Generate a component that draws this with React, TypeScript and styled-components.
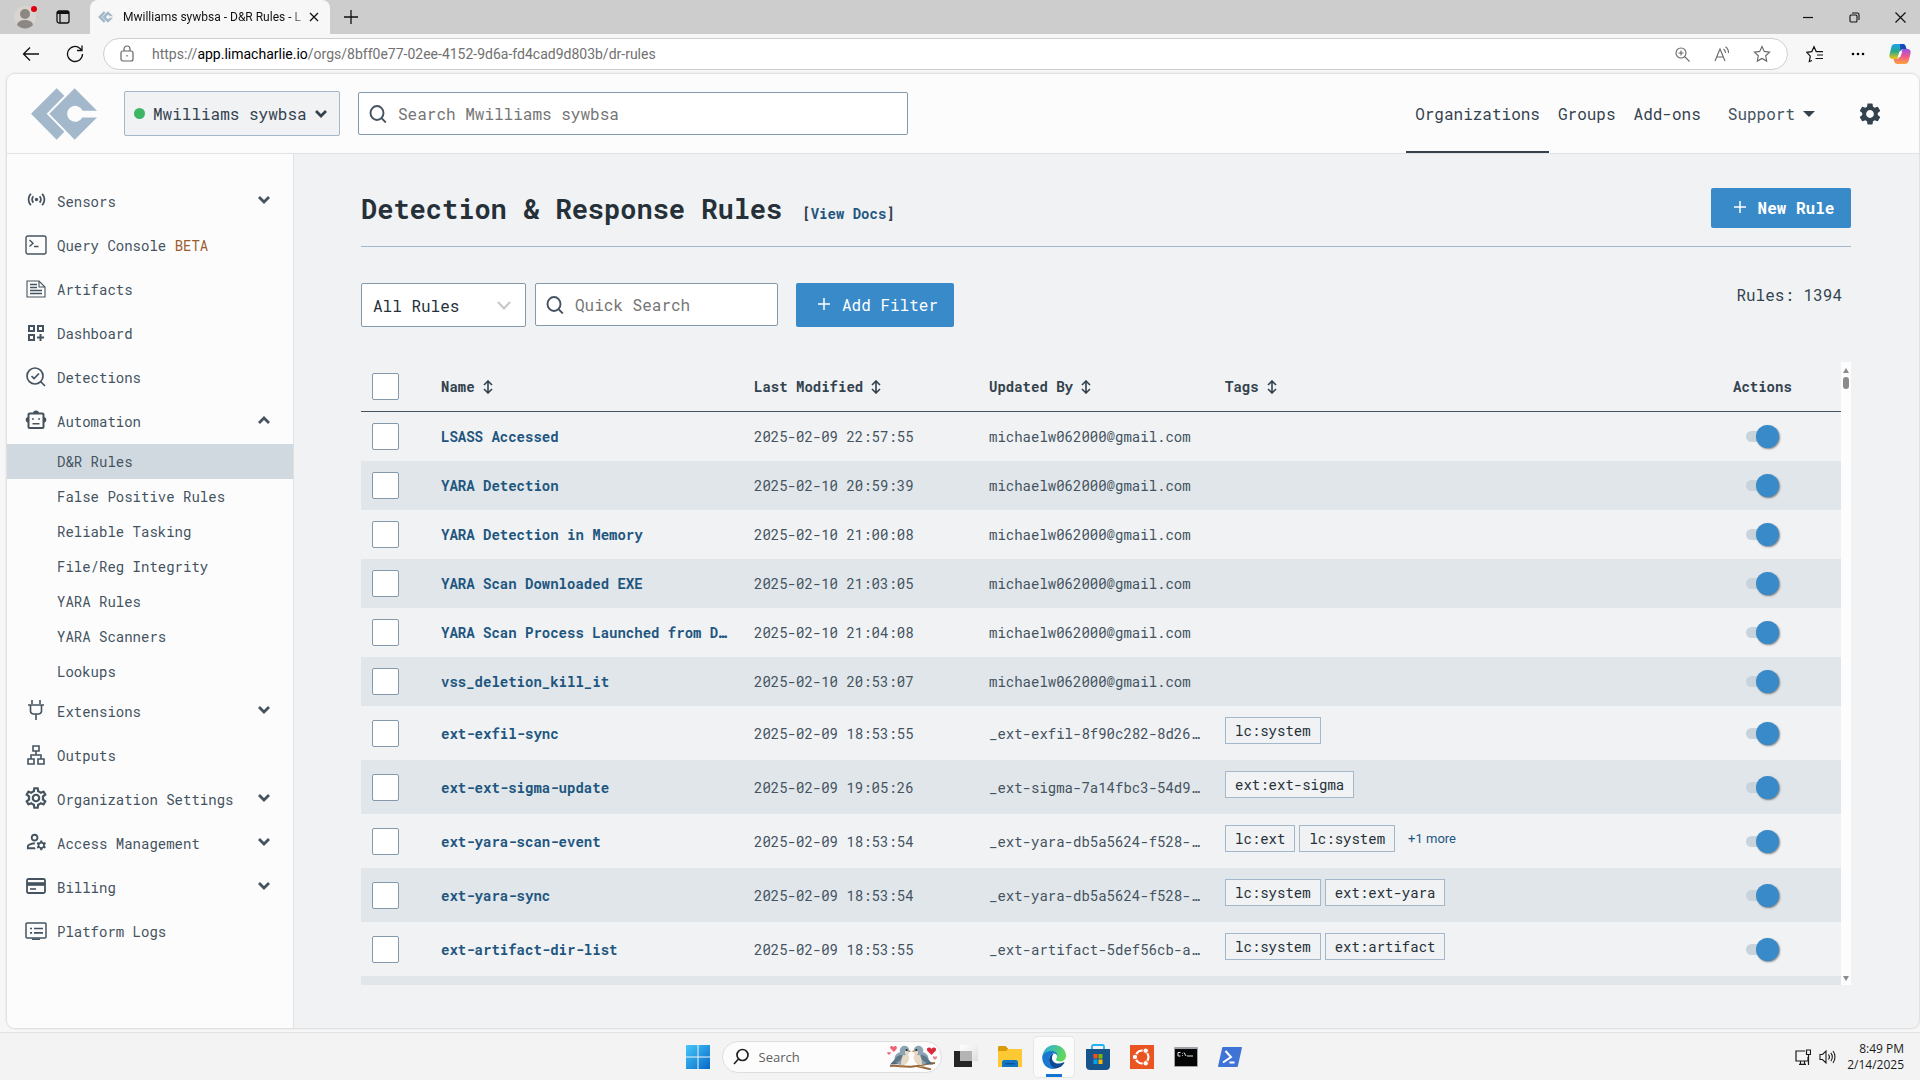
import React, { useState } from "react";
import styled, { createGlobalStyle, css } from "styled-components";
import { MdOutlineManageAccounts, MdOutlineSettings, MdSensors, MdSettings } from "react-icons/md";

const mono = `"Roboto Mono", "Liberation Mono", monospace`;
const ui = `"Segoe UI", "Open Sans", "Noto Sans", sans-serif`;
const uiNarrow = `"Segoe UI", Roboto, sans-serif`;

const color = {
  ink: "#263038",
  slate: "#34424e",
  text: "#44535f",
  link: "#1f567f",
  blue: "#388ac9",
  line: "#a3b8ca",
  field: "#8499ab",
  canvas: "#f0f2f4",
  stripe: "#e0e6ea",
  panel: "#fcfcfc",
};

const GlobalStyle = createGlobalStyle`
  *, *::before, *::after { box-sizing: border-box; }
  body { margin: 0; background: #f7f7f7; font-family: ${mono}; color: ${color.text}; }
  button, input, select { font: inherit; color: inherit; }
  button { border: 0; padding: 0; background: none; cursor: pointer; }
  a { color: inherit; text-decoration: none; }
  ul { list-style: none; margin: 0; padding: 0; }
  svg { display: block; flex: none; }
`;

const Desktop = styled.div`
  display: flex;
  flex-direction: column;
  height: 100vh;
  min-height: 720px;
  overflow: hidden;
`;

/* ---------- Browser window ---------- */

const TitleBar = styled.header`
  display: flex;
  align-items: center;
  flex: none;
  height: 34px;
  background: #cdcdcd;
  color: #111;
  font-family: ${uiNarrow};
`;

const TitleTools = styled.div`
  display: flex;
  align-items: center;
  gap: 16px;
  width: 90px;
  padding-left: 14px;
`;

const IconButton = styled.button<{ $w?: number; $color?: string }>`
  display: flex;
  align-items: center;
  justify-content: center;
  flex: none;
  width: ${(p) => p.$w ?? 24}px;
  height: 28px;
  color: ${(p) => p.$color ?? "#111"};
`;

const Tab = styled.div`
  display: flex;
  align-items: center;
  width: 240px;
  height: 34px;
  padding: 0 10px 0 8px;
  border-radius: 8px 8px 0 0;
  background: #f7f7f7;
`;

const TabTitle = styled.span`
  flex: 1;
  margin-left: 10px;
  white-space: nowrap;
  font-size: 12px;
  line-height: 16px;
  mask-image: linear-gradient(90deg, #000 90%, transparent);
`;

const WindowButtons = styled.div`
  display: flex;
  gap: 18px;
  margin-left: auto;
  padding-right: 6px;
`;

const Toolbar = styled.div`
  display: flex;
  align-items: center;
  flex: none;
  gap: 14px;
  height: 40px;
  padding: 0 8px 0 17px;
  background: #f7f7f7;
  font-family: ${uiNarrow};
`;

const Address = styled.div`
  display: flex;
  align-items: center;
  flex: 1;
  gap: 18px;
  height: 32px;
  padding: 0 11px 0 16px;
  border: 1px solid #cfcfcf;
  border-radius: 16px;
  background: #fff;
`;

const Url = styled.a`
  flex: 1;
  color: #717171;
  font-size: 14px;
  line-height: 20px;
  b { color: #000; font-weight: 400; }
`;

const ToolGroup = styled.div<{ $gap: number }>`
  display: flex;
  align-items: center;
  gap: ${(p) => p.$gap}px;
`;

const Page = styled.div`
  display: flex;
  flex-direction: column;
  flex: 1;
  min-height: 0;
  margin: 0 1px 4px 7px;
  overflow: hidden;
  border-radius: 8px;
  background: ${color.canvas};
  box-shadow: 0 0 2px 1px #d9d9d9;
`;

/* ---------- Application header ---------- */

const AppHeader = styled.header`
  display: flex;
  align-items: center;
  flex: none;
  height: 80px;
  padding: 0 36px 0 24px;
  border-bottom: 1px solid #e0e2e4;
  background: ${color.panel};
`;

const OrgButton = styled.button`
  display: flex;
  align-items: center;
  gap: 8px;
  width: 216px;
  height: 45px;
  margin: 0 18px 0 27px;
  padding: 0 12px 0 9px;
  border: 1px solid ${color.line};
  border-radius: 2px;
  background: ${color.canvas};
  color: ${color.slate};
  font-size: 16px;
  span { flex: 1; text-align: left; white-space: nowrap; }
  i { width: 11px; height: 11px; border-radius: 50%; background: #3db564; }
`;

const SearchBox = styled.label<{ $w: number }>`
  display: flex;
  align-items: center;
  gap: 11px;
  width: ${(p) => p.$w}px;
  height: 43px;
  padding: 0 10px;
  border: 1px solid ${color.field};
  border-radius: 2px;
  background: #fff;
  color: ${color.text};
  input {
    flex: 1;
    min-width: 0;
    padding: 0;
    border: 0;
    outline: 0;
    background: none;
    font-size: 16px;
  }
  input::placeholder { color: #757575; opacity: 1; }
`;

const TopNav = styled.nav`
  display: flex;
  align-self: stretch;
  margin-left: auto;
`;

const TopLink = styled.a<{ $active?: boolean }>`
  display: flex;
  align-items: center;
  padding: 2px 9px 0;
  border-bottom: 2px solid ${(p) => (p.$active ? color.slate : "transparent")};
  color: ${color.slate};
  font-size: 16px;
`;

const SupportButton = styled.button`
  display: flex;
  align-items: center;
  gap: 8px;
  margin: 0 42px 0 18px;
  font-size: 16px;
`;

const Body = styled.div`
  display: flex;
  flex: 1;
  min-height: 0;
`;

/* ---------- Sidebar ---------- */

const Sidebar = styled.nav`
  flex: none;
  width: 287px;
  padding-top: 25px;
  border-right: 1px solid #dfe2e5;
  background: ${color.panel};
  font-size: 14px;
`;

const rowStyle = css`
  display: flex;
  align-items: center;
  gap: 9px;
  width: 100%;
  height: 44px;
  padding: 0 23px 0 17px;
  text-align: left;
  white-space: nowrap;
`;

const SideLink = styled.a`${rowStyle}`;
const SideButton = styled.button`
  ${rowStyle}
  svg { margin-bottom: 3px; }
`;

const SideLabel = styled.span`
  flex: 1;
  em { color: #9c5a2b; font-style: normal; }
`;

const SideIcon = styled.span`
  display: flex;
  align-items: center;
  justify-content: center;
  flex: none;
  width: 24px;
  height: 24px;
`;

const SubList = styled.ul`
  padding-top: 1px;
`;

const SubLink = styled.a<{ $active?: boolean }>`
  display: flex;
  align-items: center;
  height: 35px;
  padding-left: 50px;
  background: ${(p) => (p.$active ? "#d1d9e0" : "transparent")};
`;

/* ---------- Rules page ---------- */

const Main = styled.main`
  display: flex;
  flex-direction: column;
  flex: 1;
  min-width: 0;
  padding: 34px 68px 43px 67px;
`;

const Heading = styled.div`
  display: flex;
  align-items: flex-start;
  justify-content: space-between;
  flex: none;
  height: 59px;
  border-bottom: 1px solid ${color.line};
`;

const Title = styled.div`
  display: flex;
  align-items: baseline;
  gap: 20px;
  padding-top: 5px;
  font-size: 14px;
  font-weight: 700;
  color: ${color.slate};
  h1 { margin: 0; color: ${color.ink}; font-size: 27px; line-height: 32px; }
  a { color: ${color.link}; }
`;

const PrimaryButton = styled.button<{ $w: number; $h: number; $bold?: boolean }>`
  display: flex;
  align-items: center;
  justify-content: center;
  gap: 12px;
  width: ${(p) => p.$w}px;
  height: ${(p) => p.$h}px;
  padding: 0 0 2px 6px;
  border-radius: 2px;
  background: ${color.blue};
  color: #fff;
  font-size: 16px;
  font-weight: ${(p) => (p.$bold ? 700 : 400)};
`;

const Filters = styled.div`
  display: flex;
  align-items: flex-start;
  flex: none;
  padding: 36px 9px 35px 0;
`;

const SelectBox = styled.label`
  display: grid;
  align-items: center;
  width: 165px;
  height: 44px;
  margin-right: 9px;
  border: 1px solid ${color.field};
  border-radius: 2px;
  background: #fff;
  select {
    grid-area: 1 / 1;
    width: 100%;
    height: 100%;
    padding: 0 40px 0 11px;
    border: 0;
    outline: 0;
    appearance: none;
    background: none;
    color: ${color.ink};
    font-size: 16px;
  }
  svg { grid-area: 1 / 1; justify-self: end; margin-right: 14px; pointer-events: none; }
`;

const QuickSearchSlot = styled.div`
  margin-right: 18px;
`;

const RuleCount = styled.p`
  margin: 0 0 0 auto;
  color: ${color.slate};
  font-size: 16px;
  line-height: 24px;
`;

const Scroller = styled.div`
  display: flex;
  flex: 1;
  min-height: 0;
`;

const TableView = styled.div`
  flex: 1;
  min-width: 0;
  overflow: hidden;
`;

const Table = styled.table`
  width: 100%;
  table-layout: fixed;
  border-collapse: separate;
  border-spacing: 0;
  font-size: 14px;
  td, th { padding: 0 10px; text-align: left; white-space: nowrap; overflow: hidden; }
  th { height: 50px; border-bottom: 1px solid ${color.text}; color: ${color.slate}; }
  td:nth-child(2) { text-overflow: ellipsis; }
  tbody tr:nth-child(even) { background: ${color.stripe}; }
`;

const Col = styled.col<{ $w?: number }>`
  width: ${(p) => (p.$w ? `${p.$w}px` : "auto")};
`;

const Row = styled.tr<{ $tall?: boolean }>`
  height: ${(p) => (p.$tall ? 54 : 49)}px;
`;

const SortButton = styled.button`
  display: flex;
  align-items: center;
  gap: 8px;
  font-weight: 700;
`;

const Check = styled.input`
  display: block;
  width: 27px;
  height: 27px;
  margin: 0 0 0 1px;
  appearance: none;
  border: 1px solid ${color.field};
  border-radius: 2px;
  background: #fff;
  &:checked { background: ${color.blue}; }
`;

const RuleLink = styled.a`
  color: ${color.link};
  font-weight: 700;
`;

const Tags = styled.div`
  display: flex;
  gap: 4px;
  padding-bottom: 5px;
`;

const Tag = styled.span`
  padding: 0 9px;
  border: 1px solid ${color.line};
  background: ${color.canvas};
  color: ${color.ink};
  line-height: 25px;
`;

const MoreTags = styled.button`
  margin-left: 9px;
  color: ${color.link};
  font-family: Roboto, sans-serif;
  font-size: 13px;
`;

const Toggle = styled.input`
  display: flex;
  align-items: center;
  width: 28px;
  height: 11px;
  margin: 0 0 0 13px;
  appearance: none;
  background: #c9d3db;
  border-radius: 6px;
  &::before {
    content: "";
    flex: none;
    width: 23px;
    height: 23px;
    border-radius: 50%;
    background: #9aa7b1;
    box-shadow: 1px 1px 2px rgba(0, 0, 0, 0.45);
  }
  &:checked::before { margin-left: 10px; background: ${color.blue}; }
`;

const ScrollBar = styled.div`
  display: flex;
  flex-direction: column;
  align-items: center;
  gap: 4px;
  width: 10px;
  padding: 6px 0 4px;
  background: #fdfdfd;
  i { width: 6px; height: 12px; border-radius: 3px; background: #8b8b8b; }
  svg:last-child { margin-top: auto; }
`;

/* ---------- Taskbar ---------- */

const Taskbar = styled.footer`
  display: grid;
  grid-template-columns: 1fr auto 1fr;
  align-items: center;
  flex: none;
  height: 48px;
  border-top: 1px solid #e2e2e2;
  background: #f3f3f3;
  font-family: ${ui};
`;

const Apps = styled.div`
  display: flex;
  align-items: center;
  grid-column: 2;
  padding-left: 7px;
`;

const AppButton = styled.button<{ $active?: boolean }>`
  display: flex;
  align-items: center;
  justify-content: center;
  width: 40px;
  height: 40px;
  margin: 0 2px;
  border-radius: 4px;
  ${(p) =>
    p.$active &&
    css`
      background: linear-gradient(#0f74d2, #0f74d2) 50% 100% / 16px 3px no-repeat #fbfbfb;
      box-shadow: 0 0 0 1px #e6e6e6;
    `}
`;

const TaskSearch = styled.label`
  display: flex;
  align-items: center;
  gap: 10px;
  width: 220px;
  height: 32px;
  margin: 0 2px;
  padding: 0 4px 0 10px;
  border: 1px solid #dedede;
  border-radius: 16px;
  background: #fcfcfc;
  input {
    flex: 1;
    width: 0;
    padding: 0;
    border: 0;
    outline: 0;
    background: none;
    font-size: 13px;
  }
  input::placeholder { color: #5e5e5e; opacity: 1; }
`;

const Tray = styled.div`
  display: flex;
  align-items: center;
  justify-self: end;
  gap: 8px;
  padding-right: 16px;
  color: #1b1b1b;
`;

const Clock = styled.time`
  margin-left: 3px;
  text-align: right;
  font-size: 12px;
  line-height: 16px;
`;

/* ---------- Drawings ---------- */

const Logo = ({ size }: { size: number }) => (
  <svg width={size} height={Math.round((size * 155) / 198)} viewBox="0 0 198 155" fill="#a3b8ca">
    <path d="M0 77 77 0l23 23-53 54 53 54-23 24z" />
    <path d="M55 77 131 0l67 68h-43a24 24 0 1 0-1 20h44l-67 67z" />
  </svg>
);

const SearchIcon = () => (
  <svg width="18" height="18" viewBox="0 0 18 18" fill="none" stroke="currentColor" strokeWidth="1.900">
    <ellipse cx="8" cy="8" rx="6.500" ry="7" />
    <path d="m12.500 13.200 4.300 4.300" />
  </svg>
);

const Chevron = ({ up = false }: { up?: boolean }) => (
  <svg width="12" height="8" viewBox="0 0 12 8" fill="none" stroke="currentColor" strokeWidth="2.800">
    <path d={up ? "m1 7 5-5 5 5" : "m1 1 5 5 5-5"} />
  </svg>
);

const Plus = () => (
  <svg width="12" height="12" viewBox="0 0 12 12" fill="none" stroke="currentColor" strokeWidth="1.500">
    <path d="M6 0v12M0 6h12" />
  </svg>
);

const Sort = () => (
  <svg width="10" height="14" viewBox="0 0 10 14" fill="none" stroke="currentColor" strokeWidth="1.600">
    <path d="M5 1v12M1 5l4-4 4 4M1 9l4 4 4-4" />
  </svg>
);

const Line = ({ children, w = 22, h = 22, sw = 1.6 }: { children: React.ReactNode; w?: number; h?: number; sw?: number }) => (
  <svg width={w} height={h} viewBox={`0 0 ${w} ${h}`} fill="none" stroke="currentColor" strokeWidth={sw}>
    {children}
  </svg>
);

const ConsoleIcon = () => (
  <Line w={22} h={20} sw={1.4}>
    <rect x="1" y="1" width="20" height="18" rx="2" />
    <path d="m4.500 5 3.500 3.300L4.500 11.500M9 11.500h4.500" />
  </Line>
);
const ArtifactIcon = () => (
  <Line w={20} h={18} sw={1.1}>
    <path d="M1 1h12l6 6v10H1zM13 1v6h6" />
    <path d="M4 4.500h7M4 7.500h7M4 10.500h12M4 13.500h12" strokeWidth="1.300" />
  </Line>
);
const DashboardIcon = () => (
  <Line w={18} h={18} sw={2}>
    <path d="M2 2h5v5H2zM11 2h5v5h-5zM2 11h5v5H2zM13.500 10v7M10 13.500h7" />
  </Line>
);
const DetectIcon = () => (
  <Line w={20} h={20} sw={1.7}>
    <circle cx="9" cy="9" r="8" />
    <path d="m14.500 14.500 4.500 4.500M5.500 9l2.500 2.500 5-5" />
  </Line>
);
const RobotIcon = () => (
  <Line w={22} h={20} sw={2}>
    <rect x="3.500" y="3.500" width="15" height="14.500" rx="1" />
    <path d="M3.500 7a2.800 2.800 0 0 0 0 5.600zM18.500 7a2.800 2.800 0 0 1 0 5.600zM8 3.500a3 3 0 0 1 6 0z" fill="currentColor" stroke="none" />
    <path d="M7 9h1.800M13.200 9H15M7.500 13.800h7" strokeWidth="1.500" />
  </Line>
);
const PlugIcon = () => (
  <Line w={18} h={20} sw={1.6}>
    <path d="M5 0v4M13 0v4M1 5h16M3.500 5v6a3 3 0 0 0 3 3h5a3 3 0 0 0 3-3V5M9 14v6" />
  </Line>
);
const OutputIcon = () => (
  <Line w={18} h={20} sw={1.6}>
    <path d="M6 1h6v5H6zM1 14h6v5H1zM11 14h6v5h-6zM9 6v4M4 14v-4h10v4" />
  </Line>
);
const CardIcon = () => (
  <Line w={20} h={16} sw={1.8}>
    <rect x="1" y="1" width="18" height="14" rx="1.500" />
    <path d="M1 6h18" strokeWidth="3.600" />
    <path d="M4 11h6" strokeWidth="1.600" />
  </Line>
);
const LogsIcon = () => (
  <Line w={22} h={18} sw={1.5}>
    <rect x="1" y="1" width="20" height="15" rx="1" />
    <path d="M7 17.300h8M5 6.500h2M9 6.500h9M5 10.800h2M9 10.800h9" strokeWidth="1.700" />
  </Line>
);

const Avatar = () => (
  <svg width="26" height="24" viewBox="0 0 26 24">
    <circle cx="11" cy="12" r="11" fill="#d8d4cf" />
    <circle cx="11" cy="9" r="5" fill="#8c8782" />
    <path d="M3 20a8 5 0 0 1 16 0 11 11 0 0 1-16 0z" fill="#8c8782" />
    <circle cx="20" cy="4" r="3" fill="#e2000f" />
  </svg>
);

const TabsIcon = () => (
  <svg width="14" height="14" viewBox="0 0 14 14" fill="none" stroke="#111" strokeWidth="1.300">
    <rect x="1" y="1" width="12" height="12" rx="2" />
    <path d="M1 2.500h12" strokeWidth="3" />
    <path d="M4 4v9" />
  </svg>
);

const Copilot = () => (
  <svg width="22" height="22" viewBox="0 0 22 22">
    <defs>
      <linearGradient id="cpA" x1="0" y1="0" x2="0" y2="1">
        <stop offset="0" stopColor="#1da1f0" />
        <stop offset=".5" stopColor="#2aa88d" />
        <stop offset="1" stopColor="#f7c80a" />
      </linearGradient>
      <linearGradient id="cpB" x1="0" y1="0" x2="0" y2="1">
        <stop offset="0" stopColor="#9b4fe8" />
        <stop offset=".5" stopColor="#f0598a" />
        <stop offset="1" stopColor="#ffa33d" />
      </linearGradient>
    </defs>
    <path d="M6 1h8a3 3 0 0 1 2.500 2l1 3h-3c-2 0-3 1-3.500 3l-1.500 5c-.5 1.500-1 2-3 2H3.500c-2.500 0-3.500-2-3-4.500l2-8C3 2 4.200 1 6 1z" fill="url(#cpA)" />
    <path d="M11 1h3a3 3 0 0 1 2.500 2l1 3h-3c-1.500 0-2.500.6-3 2z" fill="#1747b8" />
    <path d="M16 21H8a3 3 0 0 1-2.500-2l-1-3h3c2 0 3-1 3.500-3l1.500-5c.5-1.500 1-2 3-2h3c2.500 0 3.500 2 3 4.500l-2 8c-.5 1.500-1.700 2.500-3.500 2.500z" fill="url(#cpB)" />
    <path d="M10.500 8.500h2.800l-2 5.500H8.700z" fill="#fff" />
  </svg>
);

const starPath = "m9 1.500 2.300 4.900 5.300.7-3.900 3.700 1 5.300L9 13.500l-4.700 2.600 1-5.300L1.400 7.100l5.300-.7z";

const WindowsLogo = () => (
  <svg width="24" height="24" viewBox="0 0 24 24">
    <defs>
      <linearGradient id="win" x1="0" y1="0" x2="1" y2="1">
        <stop offset="0" stopColor="#45c8fb" />
        <stop offset="1" stopColor="#0669c7" />
      </linearGradient>
    </defs>
    <path d="M0 0h11.500v11.500H0zM12.500 0H24v11.500H12.500zM0 12.500h11.500V24H0zM12.500 12.500H24V24H12.500z" fill="url(#win)" />
  </svg>
);

const Bird = () => (
  <g>
    <path d="M0 19.500 6 13l5 6z" fill="#4f687a" />
    <ellipse cx="11.500" cy="13.500" rx="7" ry="6.500" fill="#8ba3b2" />
    <path d="M15 8c4 1 5 4 3.500 7-1.200 3-4 5-7.500 5 0-5 1-9 4-12z" fill="#ead9c4" />
    <circle cx="14.500" cy="5.500" r="4.700" fill="#8ba3b2" />
    <path d="M15 6.500c2-1 4 0 4 1.500s-2.500 2.500-4 1z" fill="#ead9c4" />
    <path d="M3.500 18c1-5 4-8 8.500-8 .5 4-3 8-8.500 8z" fill="#5d7688" />
    <path d="m19 5 2.300 1.200L19 7.300z" fill="#d89246" />
    <circle cx="16.700" cy="5" r="1" fill="#222" />
    <path d="M10 20v2.500M13 20v2.500" stroke="#c98445" strokeWidth="1" />
  </g>
);

const Lovebirds = () => (
  <svg width="50" height="26" viewBox="0 0 50 26">
    <path d="M3 22c9-1 14 1.500 23 .5 8-.5 12-3 22-3.500M30 22l14 3.500" fill="none" stroke="#98693e" strokeWidth="1.900" />
    <g transform="translate(3 1)"><Bird /></g>
    <g transform="translate(46 1) scale(-1 1)"><Bird /></g>
    <path d="M7 8 3.500 4.500C2 2.500 5 .8 6.500 3 8 .8 11 2.500 9.500 5zM2 11 .3 9.200C-.2 8 1.500 7.300 2 8.500 2.700 7.300 4.300 8 3.700 9.200z" fill="#ee6473" />
    <path d="m44.500 11-4-4c-2-3 2-5 4-2 2-3 6-1 4 2z" fill="#dd2b3d" />
    <path d="m48 16-2-2c-.8-1.500 1-2.300 2-1 1-1.300 2.600-.5 2 1z" fill="#f2808b" />
  </svg>
);

const TaskView = () => (
  <svg width="24" height="24" viewBox="0 0 24 24">
    <defs>
      <linearGradient id="tv" x1="0" y1="0" x2="1" y2="1">
        <stop offset="0" stopColor="#ffffff" />
        <stop offset="1" stopColor="#dedede" />
      </linearGradient>
    </defs>
    <path d="M0 6h18v16H0z" fill="#252525" />
    <path d="M6 0h18v16H6z" fill="url(#tv)" />
    <path d="M6 6h12v10H6z" fill="#b4b4b4" />
  </svg>
);

const Folder = () => (
  <svg width="24" height="22" viewBox="0 0 24 22">
    <path d="M0 1.500C0 .5.500 0 1.500 0h6l3 3H22v5H0z" fill="#d99a0b" />
    <path d="M0 5h8l2-2h12.500c1 0 1.500.5 1.500 1.500V21H0z" fill="#fcc934" />
    <path d="M4 21v-5c0-1 1-2 2-2h12c1 0 2 1 2 2v5z" fill="#1274c4" />
    <path d="M7 17h10v1.500H7z" fill="#0b5596" />
  </svg>
);

const EdgeLogo = () => (
  <svg width="24" height="24" viewBox="0 0 24 24">
    <defs>
      <linearGradient id="edA" x1="0" y1="0" x2="1" y2=".4">
        <stop offset="0" stopColor="#2aa9e8" />
        <stop offset="1" stopColor="#5fd95a" />
      </linearGradient>
    </defs>
    <path d="M.5 11C1 5 6 0 12 0c7 0 12 5 12 10.500 0 4-3 6-6 6-2.500 0-4-1-4-2 0-.7 1-1 1-3C15 9 12.500 7 9.500 7 5 7 1.500 9 .5 11z" fill="url(#edA)" />
    <path d="M.3 11C2 7.500 6 6 9.500 6c4 0 6 2.500 6 5 0-1-1.500-2.500-3.500-2.500-3 0-5 3-5 6.500 0 4 3 8 7 8.500-8 2-14.500-4-13.700-12.500z" fill="#1779d0" />
    <path d="M10 9c-2 1-3 3.500-3 6 0 5 4 9 7 8.500 3.500-.5 6.500-2.500 8.300-5.500.3-.6-.2-1-.7-.7-5.600 2.700-11.600.7-11.600-4.300 0-1.500.5-3 1.500-4z" fill="#0c4a96" />
  </svg>
);

const StoreLogo = () => (
  <svg width="24" height="26" viewBox="0 0 24 26">
    <path d="M6 6V2.500C6 1.500 6.500 1 7.500 1h9c1 0 1.500.5 1.500 1.500V6" fill="none" stroke="#20b4ee" strokeWidth="1.800" />
    <path d="M0 5h24v17c0 2.500-1.500 4-4 4H4c-2.500 0-4-1.500-4-4z" fill="#18548c" />
    <path d="M7.500 10h4v4.500h-4z" fill="#f25022" />
    <path d="M12.500 10h4v4.500h-4z" fill="#7fba00" />
    <path d="M7.500 15.500h4V20h-4z" fill="#00a4ef" />
    <path d="M12.500 15.500h4V20h-4z" fill="#ffb900" />
  </svg>
);

const UbuntuLogo = () => (
  <svg width="24" height="24" viewBox="0 0 24 24">
    <path d="M0 0h24v24H0z" fill="#e95420" />
    <circle cx="12" cy="12" r="6.500" fill="none" stroke="#fff" strokeWidth="2.200" />
    <g fill="#fff" stroke="#e95420" strokeWidth="1">
      <circle cx="5" cy="12" r="2.700" />
      <circle cx="15.700" cy="5.700" r="2.700" />
      <circle cx="15.700" cy="18.300" r="2.700" />
    </g>
  </svg>
);

const TerminalLogo = () => (
  <svg width="24" height="20" viewBox="0 0 24 20">
    <rect width="24" height="20" rx="1" fill="#9da3a8" />
    <path d="M1 2h22v17H1z" fill="#050505" />
    <path d="M6.500 5.500H4v3.500h2.500M8.500 6v.6M8.500 8.300V9M10 5.500l2 3.500M13 9h6" fill="none" stroke="#e5e5e5" strokeWidth="1" />
  </svg>
);

const PowerShellLogo = () => (
  <svg width="24" height="20" viewBox="0 0 24 20">
    <path d="M5 0h18c.8 0 1 .5.9 1l-4 18c-.2.600-.5 1-1.200 1H.8c-.6 0-.9-.4-.7-1l4-18c.1-.6.4-1 .9-1z" fill="#3f74d6" />
    <path d="m7.500 4 5.500 6-8 5.500M11.500 15.500h5" fill="none" stroke="#fff" strokeWidth="2" />
  </svg>
);

/* ---------- Data ---------- */

type Item = { label: string; badge?: string; icon: React.ReactNode; menu?: boolean; children?: string[] };

const items: Item[] = [
  { label: "Sensors", icon: <MdSensors size={21} />, menu: true },
  { label: "Query Console", badge: "BETA", icon: <ConsoleIcon /> },
  { label: "Artifacts", icon: <ArtifactIcon /> },
  { label: "Dashboard", icon: <DashboardIcon /> },
  { label: "Detections", icon: <DetectIcon /> },
  {
    label: "Automation",
    icon: <RobotIcon />,
    menu: true,
    children: ["D&R Rules", "False Positive Rules", "Reliable Tasking", "File/Reg Integrity", "YARA Rules", "YARA Scanners", "Lookups"],
  },
  { label: "Extensions", icon: <PlugIcon />, menu: true },
  { label: "Outputs", icon: <OutputIcon /> },
  { label: "Organization Settings", icon: <MdOutlineSettings size={26} />, menu: true },
  { label: "Access Management", icon: <MdOutlineManageAccounts size={23} />, menu: true },
  { label: "Billing", icon: <CardIcon />, menu: true },
  { label: "Platform Logs", icon: <LogsIcon /> },
];

type Rule = { name: string; modified: string; by: string; tags?: string[]; more?: number };

const gmail = "michaelw062000@gmail.com";

const rules: Rule[] = [
  { name: "LSASS Accessed", modified: "2025-02-09 22:57:55", by: gmail },
  { name: "YARA Detection", modified: "2025-02-10 20:59:39", by: gmail },
  { name: "YARA Detection in Memory", modified: "2025-02-10 21:00:08", by: gmail },
  { name: "YARA Scan Downloaded EXE", modified: "2025-02-10 21:03:05", by: gmail },
  { name: "YARA Scan Process Launched from D…", modified: "2025-02-10 21:04:08", by: gmail },
  { name: "vss_deletion_kill_it", modified: "2025-02-10 20:53:07", by: gmail },
  { name: "ext-exfil-sync", modified: "2025-02-09 18:53:55", by: "_ext-exfil-8f90c282-8d26…", tags: ["lc:system"] },
  { name: "ext-ext-sigma-update", modified: "2025-02-09 19:05:26", by: "_ext-sigma-7a14fbc3-54d9…", tags: ["ext:ext-sigma"] },
  { name: "ext-yara-scan-event", modified: "2025-02-09 18:53:54", by: "_ext-yara-db5a5624-f528-…", tags: ["lc:ext", "lc:system"], more: 1 },
  { name: "ext-yara-sync", modified: "2025-02-09 18:53:54", by: "_ext-yara-db5a5624-f528-…", tags: ["lc:system", "ext:ext-yara"] },
  { name: "ext-artifact-dir-list", modified: "2025-02-09 18:53:55", by: "_ext-artifact-5def56cb-a…", tags: ["lc:system", "ext:artifact"] },
];

const sortable = ["Name", "Last Modified", "Updated By", "Tags"];

/* ---------- Sections ---------- */

function BrowserChrome() {
  return (
    <>
      <TitleBar>
        <TitleTools>
          <IconButton $w={26} aria-label="Profile"><Avatar /></IconButton>
          <IconButton $w={14} aria-label="Tab actions"><TabsIcon /></IconButton>
        </TitleTools>
        <Tab>
          <Logo size={15} />
          <TabTitle>Mwilliams sywbsa - D&amp;R Rules - L</TabTitle>
          <IconButton $w={12} aria-label="Close tab">
            <Line w={10} h={10} sw={1.3}><path d="m1 1 8 8M9 1 1 9" /></Line>
          </IconButton>
        </Tab>
        <IconButton $w={42} aria-label="New tab">
          <Line w={14} h={14} sw={1.3}><path d="M7 0v14M0 7h14" /></Line>
        </IconButton>
        <WindowButtons>
          <IconButton $w={28} aria-label="Minimize"><Line w={10} h={10} sw={1.2}><path d="M0 5.500h10" /></Line></IconButton>
          <IconButton $w={28} aria-label="Restore">
            <Line w={11} h={11} sw={1.1}><rect x="1" y="3" width="7" height="7" rx="1" /><path d="M3 1h5.500a1.500 1.500 0 0 1 1.500 1.500V8" /></Line>
          </IconButton>
          <IconButton $w={28} aria-label="Close"><Line w={11} h={11} sw={1.2}><path d="m.5.500 10 10M10.500.5l-10 10" /></Line></IconButton>
        </WindowButtons>
      </TitleBar>
      <Toolbar>
        <ToolGroup $gap={16}>
          <IconButton $w={28} aria-label="Back">
            <Line w={18} h={14} sw={1.3}><path d="M17 7H1.500M8 .5 1.500 7 8 13.500" /></Line>
          </IconButton>
          <IconButton $w={28} aria-label="Refresh">
            <Line w={18} h={18} sw={1.3}><path d="M16.500 9A7.500 7.500 0 1 1 14 3.400L15.500 5M16 .5V5.500h-5" /></Line>
          </IconButton>
        </ToolGroup>
        <Address>
          <Line w={14} h={18} sw={1.2}>
            <rect x="1" y="6" width="12" height="10" rx="2" stroke="#666" />
            <path d="M4 6V4a3 3 0 0 1 6 0v2M7 10v1.500" stroke="#666" />
          </Line>
          <Url href="#rules">https://<b>app.limacharlie.io</b>/orgs/8bff0e77-02ee-4152-9d6a-fd4cad9d803b/dr-rules</Url>
          <ToolGroup $gap={12}>
            <IconButton $w={28} $color="#666" aria-label="Zoom">
              <Line w={15} h={15} sw={1.1}><circle cx="6" cy="6" r="5" /><path d="m9.700 9.700 4.800 4.800M6 3.500v5M3.500 6h5" /></Line>
            </IconButton>
            <IconButton $w={28} $color="#666" aria-label="Read aloud">
              <Line w={16} h={16} sw={1.1}><path d="M1 15 6 3l5 12M2.700 11h6.600M9.500 3c1.500 1 2 2.200 2 4M11.500.8c2.200 1.400 3 3.700 3 6.200" /></Line>
            </IconButton>
            <IconButton $w={28} $color="#666" aria-label="Add to favorites">
              <Line w={18} h={18} sw={1.1}><path d={starPath} /></Line>
            </IconButton>
          </ToolGroup>
        </Address>
        <ToolGroup $gap={16}>
          <IconButton $w={26} aria-label="Favorites">
            <Line w={18} h={18} sw={1.2}><path d="M6 15.500l-2.700 1 1-5.300L.8 7.300l5-.7L8 1.800l2.200 4.800H17M11 10h6M9.500 13.500H17" /></Line>
          </IconButton>
          <IconButton $w={28} aria-label="More">
            <svg width="14" height="4" viewBox="0 0 14 4"><circle cx="2" cy="2" r="1.300" /><circle cx="7" cy="2" r="1.300" /><circle cx="12" cy="2" r="1.300" /></svg>
          </IconButton>
          <IconButton $w={24} aria-label="Copilot"><Copilot /></IconButton>
        </ToolGroup>
      </Toolbar>
    </>
  );
}

function SideMenu() {
  const [open, setOpen] = useState("Automation");
  return (
    <Sidebar aria-label="Organization">
      <ul>
        {items.map((it) => {
          const body = (
            <>
              <SideIcon>{it.icon}</SideIcon>
              <SideLabel>{it.label}{it.badge && <> <em>{it.badge}</em></>}</SideLabel>
            </>
          );
          const expanded = open === it.label;
          return (
            <li key={it.label}>
              {it.menu ? (
                <SideButton aria-expanded={expanded} onClick={() => setOpen(expanded ? "" : it.label)}>
                  {body}
                  <Chevron up={expanded} />
                </SideButton>
              ) : (
                <SideLink href="#section">{body}</SideLink>
              )}
              {expanded && it.children && (
                <SubList>
                  {it.children.map((c, i) => (
                    <li key={c}><SubLink href="#sub" $active={i === 0}>{c}</SubLink></li>
                  ))}
                </SubList>
              )}
            </li>
          );
        })}
      </ul>
    </Sidebar>
  );
}

function RulesTable() {
  return (
    <Scroller>
      <TableView>
        <Table>
          <colgroup>
            <Col $w={70} /><Col $w={313} /><Col $w={235} /><Col $w={236} /><Col /><Col $w={118} />
          </colgroup>
          <thead>
            <tr>
              <th><Check type="checkbox" aria-label="Select all rules" /></th>
              {sortable.map((s) => <th key={s}><SortButton>{s}<Sort /></SortButton></th>)}
              <th>Actions</th>
            </tr>
          </thead>
          <tbody>
            {rules.map((r) => (
              <Row key={r.name} $tall={!!r.tags}>
                <td><Check type="checkbox" aria-label={`Select ${r.name}`} /></td>
                <td><RuleLink href="#rule">{r.name}</RuleLink></td>
                <td>{r.modified}</td>
                <td>{r.by}</td>
                <td>
                  {r.tags && (
                    <Tags>
                      {r.tags.map((t) => <Tag key={t}>{t}</Tag>)}
                      {r.more && <MoreTags>+{r.more} more</MoreTags>}
                    </Tags>
                  )}
                </td>
                <td><Toggle type="checkbox" role="switch" defaultChecked aria-label={`Enable ${r.name}`} /></td>
              </Row>
            ))}
            <Row $tall aria-hidden="true"><td colSpan={6} /></Row>
          </tbody>
        </Table>
      </TableView>
      <ScrollBar aria-hidden="true">
        <svg width="6" height="5" viewBox="0 0 6 5"><path d="M3 0 6 5H0z" fill="#8b8b8b" /></svg>
        <i />
        <svg width="6" height="5" viewBox="0 0 6 5"><path d="M3 5 6 0H0z" fill="#8b8b8b" /></svg>
      </ScrollBar>
    </Scroller>
  );
}

function SystemTaskbar() {
  return (
    <Taskbar>
      <Apps>
        <AppButton aria-label="Start"><WindowsLogo /></AppButton>
        <TaskSearch>
          <svg width="16" height="18" viewBox="0 0 16 18" fill="none" stroke="#222" strokeWidth="1.700"><circle cx="9.500" cy="7" r="5.500" /><path d="M5.500 11 1 16" /></svg>
          <input aria-label="Search Windows" placeholder="Search" />
          <Lovebirds />
        </TaskSearch>
        <AppButton aria-label="Task view"><TaskView /></AppButton>
        <AppButton aria-label="File Explorer"><Folder /></AppButton>
        <AppButton aria-label="Edge" $active><EdgeLogo /></AppButton>
        <AppButton aria-label="Store"><StoreLogo /></AppButton>
        <AppButton aria-label="Ubuntu"><UbuntuLogo /></AppButton>
        <AppButton aria-label="Command Prompt"><TerminalLogo /></AppButton>
        <AppButton aria-label="PowerShell"><PowerShellLogo /></AppButton>
      </Apps>
      <Tray>
        <Line w={16} h={16} sw={1.2}><path d="M10 2H1v10h12V8M4 15.400h7M5.500 12v3M9.500 12v3M11.500 1h4v4.500h-4zM13.500 5.500V16" /></Line>
        <Line w={17} h={16} sw={1.1}><path d="M1 5.500h2.500L7 2v12l-3.500-3.500H1zM9.500 5.500c1 1.300 1 3.700 0 5M11.800 3.800c2 2.300 2 6.100 0 8.400M14 2c2.600 3.400 2.600 8.600 0 12" /></Line>
        <Clock>8:49 PM<br />2/14/2025</Clock>
      </Tray>
    </Taskbar>
  );
}

export default function App() {
  return (
    <Desktop>
      <GlobalStyle />
      <BrowserChrome />
      <Page>
        <AppHeader>
          <a href="#home" aria-label="LimaCharlie"><Logo size={66} /></a>
          <OrgButton aria-haspopup="listbox"><i /><span>Mwilliams sywbsa</span><Chevron /></OrgButton>
          <SearchBox $w={550}><SearchIcon /><input aria-label="Search" placeholder="Search Mwilliams sywbsa" /></SearchBox>
          <TopNav>
            <TopLink href="#orgs" $active>Organizations</TopLink>
            <TopLink href="#groups">Groups</TopLink>
            <TopLink href="#addons">Add-ons</TopLink>
            <SupportButton>Support<svg width="12" height="6" viewBox="0 0 12 6" fill={color.slate}><path d="M0 0h12L6 6z" /></svg></SupportButton>
          </TopNav>
          <IconButton $w={26} $color={color.slate} aria-label="Settings"><MdSettings size={26} /></IconButton>
        </AppHeader>
        <Body>
          <SideMenu />
          <Main>
            <Heading>
              <Title>
                <h1>Detection &amp; Response Rules</h1>
                <span>[<a href="#docs">View Docs</a>]</span>
              </Title>
              <PrimaryButton $w={140} $h={40} $bold><Plus />New Rule</PrimaryButton>
            </Heading>
            <Filters>
              <SelectBox>
                <select aria-label="Rule type" defaultValue="All Rules"><option>All Rules</option></select>
                <svg width="14" height="9" viewBox="0 0 14 9" fill="none" stroke="#c4c8cb" strokeWidth="2"><path d="m1 1 6 6.500L13 1" /></svg>
              </SelectBox>
              <QuickSearchSlot>
                <SearchBox $w={243}><SearchIcon /><input aria-label="Quick Search" placeholder="Quick Search" /></SearchBox>
              </QuickSearchSlot>
              <PrimaryButton $w={158} $h={44}><Plus />Add Filter</PrimaryButton>
              <RuleCount>Rules: 1394</RuleCount>
            </Filters>
            <RulesTable />
          </Main>
        </Body>
      </Page>
      <SystemTaskbar />
    </Desktop>
  );
}
